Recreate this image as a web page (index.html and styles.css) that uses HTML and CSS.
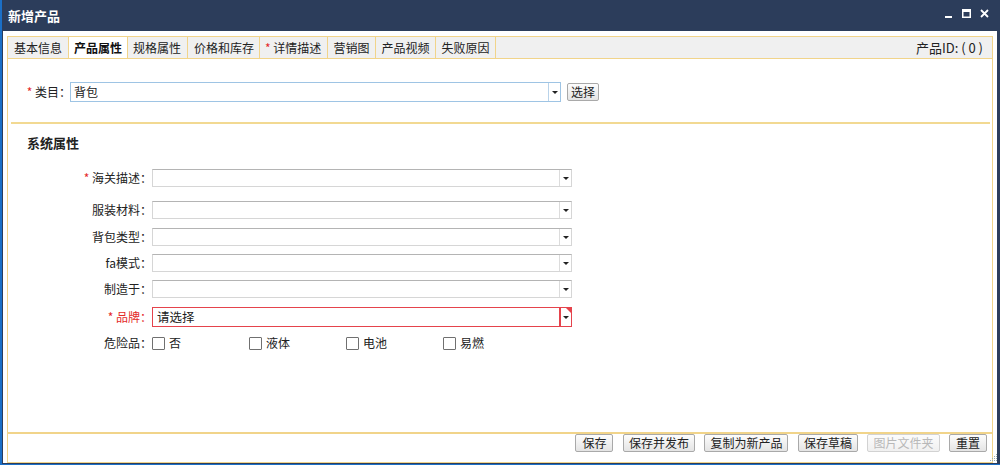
FILE: index.html
```html
<!DOCTYPE html>
<html lang="zh-CN">
<head>
<meta charset="utf-8">
<title>新增产品</title>
<link rel="stylesheet" href="styles.css">
</head>
<body>
<div class="window">
  <div class="titlebar">
    <span class="title">新增产品</span>
    <div class="controls">
      <svg class="ctl" width="9" height="9" viewBox="0 0 9 9"><rect x="1" y="7" width="7" height="2" fill="#fff"/></svg>
      <svg class="ctl" width="9" height="9" viewBox="0 0 9 9"><rect x="0.75" y="0.75" width="7.5" height="7.5" fill="none" stroke="#fff" stroke-width="1.5"/><rect x="0" y="0" width="9" height="3" fill="#fff"/></svg>
      <svg class="ctl" width="9" height="9" viewBox="0 0 9 9"><path d="M1 1 L8 8 M8 1 L1 8" stroke="#fff" stroke-width="1.8" fill="none"/></svg>
    </div>
  </div>
  <div class="client">
    <div class="tabpanel">
      <div class="tabstrip">
        <div class="tab tab-first">基本信息</div>
        <div class="tab active">产品属性</div>
        <div class="tab">规格属性</div>
        <div class="tab tab-wide">价格和库存</div>
        <div class="tab"><span class="req">*</span> 详情描述</div>
        <div class="tab">营销图</div>
        <div class="tab">产品视频</div>
        <div class="tab">失败原因</div>
        <div class="pid">产品ID: ( 0 )</div>
      </div>
      <div class="panel">
        <div class="cat-row">
          <label class="cat-label"><span class="req">*</span> 类目：</label>
          <div class="combo combo-cat"><span class="combo-text">背包</span><span class="combo-btn"><i class="caret"></i></span></div>
          <button class="btn btn-pick">选择</button>
        </div>
        <div class="sep"></div>
        <div class="section-title">系统属性</div>
        <div class="attrs">
          <div class="row row-first">
            <label class="lbl"><span class="req">*</span> 海关描述：</label>
            <div class="combo"><span class="combo-text"></span><span class="combo-btn"><i class="caret"></i></span></div>
          </div>
          <div class="row row-a">
            <label class="lbl">服装材料：</label>
            <div class="combo"><span class="combo-text"></span><span class="combo-btn"><i class="caret"></i></span></div>
          </div>
          <div class="row row-a">
            <label class="lbl">背包类型：</label>
            <div class="combo"><span class="combo-text"></span><span class="combo-btn"><i class="caret"></i></span></div>
          </div>
          <div class="row row-b">
            <label class="lbl">fa模式：</label>
            <div class="combo"><span class="combo-text"></span><span class="combo-btn"><i class="caret"></i></span></div>
          </div>
          <div class="row row-b">
            <label class="lbl">制造于：</label>
            <div class="combo"><span class="combo-text"></span><span class="combo-btn"><i class="caret"></i></span></div>
          </div>
          <div class="row row-brand">
            <label class="lbl lbl-error"><span class="req">*</span> 品牌：</label>
            <div class="combo combo-error"><span class="combo-text">请选择</span><span class="combo-btn"><i class="caret"></i></span><i class="err-mark"></i></div>
          </div>
          <div class="row row-check">
            <label class="lbl">危险品：</label>
            <div class="checks">
              <span class="check"><i class="box"></i>否</span>
              <span class="check"><i class="box"></i>液体</span>
              <span class="check"><i class="box"></i>电池</span>
              <span class="check"><i class="box"></i>易燃</span>
            </div>
          </div>
        </div>
      </div>
      <div class="footer">
        <button class="btn">保存</button>
        <button class="btn">保存并发布</button>
        <button class="btn">复制为新产品</button>
        <button class="btn">保存草稿</button>
        <button class="btn btn-disabled">图片文件夹</button>
        <button class="btn">重置</button>
      </div>
    </div>
  </div>
  <svg class="grip" width="8" height="8" viewBox="0 0 8 8">
    <rect x="6" y="0" width="1" height="1" fill="#9aa"/>
    <rect x="4" y="2" width="1" height="1" fill="#9aa"/><rect x="6" y="2" width="1" height="1" fill="#9aa"/>
    <rect x="2" y="4" width="1" height="1" fill="#9aa"/><rect x="4" y="4" width="1" height="1" fill="#9aa"/><rect x="6" y="4" width="1" height="1" fill="#9aa"/>
    <rect x="0" y="6" width="1" height="1" fill="#9aa"/><rect x="2" y="6" width="1" height="1" fill="#9aa"/><rect x="4" y="6" width="1" height="1" fill="#9aa"/><rect x="6" y="6" width="1" height="1" fill="#9aa"/>
  </svg>
</div>
</body>
</html>
```

FILE: styles.css
```css
* { box-sizing: border-box; }

html, body {
  margin: 0;
  padding: 0;
  width: 1000px;
  height: 465px;
  overflow: hidden;
  background: #2c3d5b;
}

body {
  font-family: "Noto Sans CJK SC", "Liberation Sans", sans-serif;
  font-size: 12px;
  color: #222;
}

.window {
  position: relative;
  width: 1000px;
  height: 465px;
  background: #2c3d5b;
  border-left: 2px solid #1b6fc6;
  border-bottom: 1px solid #1b6fc6;
  padding: 0 3px 1px 1px;
  display: flex;
  flex-direction: column;
}

.titlebar {
  height: 31px;
  display: flex;
  align-items: flex-start;
  padding: 0 8px 0 5px;
  flex: none;
}

.title {
  color: #fff;
  font-weight: bold;
  font-size: 13px;
  line-height: 31px;
}

.controls {
  margin-left: auto;
  margin-top: 9px;
  display: flex;
  gap: 9px;
}

.ctl { display: block; }

.client {
  flex: 1;
  background: #fff;
  padding: 5px 4px 0 4px;
  display: flex;
  flex-direction: column;
}

.tabpanel {
  flex: 1;
  display: flex;
  flex-direction: column;
}

.tabstrip {
  height: 23px;
  flex: none;
  display: flex;
  align-items: stretch;
  background: #f0f0f0;
  border: 1px solid #f1d48a;
}

.tab {
  padding: 0 6px 0 5px;
  border-right: 1px solid #f1d48a;
  line-height: 21px;
  white-space: nowrap;
  color: #222;
}

.tab-first { padding: 0 6px 0 6px; }
.tab-wide { padding: 0 5px 0 6px; }

.tab.active {
  background: #fff;
  font-weight: bold;
  color: #111;
  padding: 0 5px 0 5px;
}

.req { color: #e42a2a; }

.pid {
  margin-left: auto;
  padding-right: 9px;
  line-height: 21px;
  font-size: 13px;
  color: #222;
}

.panel {
  flex: 1;
  border-left: 1px solid #f1d48a;
  border-right: 1px solid #f1d48a;
  padding-top: 23px;
}

.cat-row {
  display: flex;
  align-items: center;
  height: 20px;
}

.cat-label {
  width: 63px;
  text-align: right;
  white-space: nowrap;
  line-height: 20px;
  flex: none;
  margin-right: -1px;
}

.combo {
  position: relative;
  display: flex;
  width: 420px;
  height: 18px;
  background: #fff;
  border: 1px solid #d6d6d6;
  border-top-color: #b4b4b4;
  flex: none;
}

.combo-text {
  flex: 1;
  padding-left: 4px;
  line-height: 16px;
  font-size: 12px;
}

.combo-btn {
  width: 12px;
  border-left: 1px solid #dcdcdc;
  display: flex;
  align-items: center;
  justify-content: center;
}

.caret {
  display: block;
  width: 0;
  height: 0;
  border-left: 3px solid transparent;
  border-right: 3px solid transparent;
  border-top: 3px solid #222;
}

.combo-cat {
  width: 491px;
  height: 20px;
  border: 1px solid #9ec4e4;
}

.combo-cat .combo-text { line-height: 18px; padding-left: 3px; }
.combo-cat .combo-btn { border-left-color: #b9d3ea; }

.btn {
  font-family: "Noto Sans CJK SC", "Liberation Sans", sans-serif;
  font-size: 12px;
  height: 18px;
  line-height: 16px;
  padding: 0 5px;
  min-width: 38px;
  border: 1px solid #a9a9a9;
  border-radius: 2px;
  background: linear-gradient(#fdfdfd, #e4e4e4);
  color: #222;
  margin: 0;
}

.btn-pick {
  margin-left: 6px;
  padding: 0 3px;
  min-width: 0;
}

.btn-disabled {
  color: #b8b8b8;
  border-color: #d2d2d2;
  background: linear-gradient(#fcfcfc, #f0f0f0);
}

.sep {
  height: 2px;
  background: #f2d992;
  margin: 20px 2px 0 3px;
}

.section-title {
  font-weight: bold;
  font-size: 13px;
  line-height: 16px;
  margin-top: 11px;
  padding-left: 19px;
}

.attrs {
  margin-top: 18px;
  display: flex;
  flex-direction: column;
}

.row {
  display: flex;
  align-items: center;
  height: 18px;
  flex: none;
}

.row-first { margin-bottom: 14px; }
.row-a { margin-bottom: 9px; }
.row-b { margin-bottom: 8px; }
.row-a + .row-a { margin-bottom: 8px; }
.row-b + .row-b { margin-bottom: 9px; }

.lbl {
  width: 144px;
  flex: none;
  text-align: right;
  white-space: nowrap;
  line-height: 18px;
}

.row-brand { height: 20px; margin-bottom: 9px; }

.combo-error {
  height: 20px;
  border: 1px solid #e5434c;
}
.combo-error .combo-text { line-height: 18px; font-size: 12.5px; }
.combo-error .combo-btn { border-left: 2px solid #e5434c; }

.err-mark {
  position: absolute;
  right: 0;
  top: 0;
  width: 0;
  height: 0;
  border-top: 5px solid #e5434c;
  border-left: 5px solid transparent;
}

.lbl-error { color: #e42a2a; }

.row-check { height: 14px; }

.checks {
  display: flex;
  align-items: center;
}

.check {
  width: 97px;
  display: flex;
  align-items: center;
  gap: 4px;
  line-height: 14px;
}

.box {
  display: block;
  width: 13px;
  height: 13px;
  border: 1px solid #707070;
  border-radius: 1px;
  background: #fff;
}

.footer {
  flex: none;
  height: 31px;
  border-top: 2px solid #f1d48a;
  border-bottom: 1px solid #f1d48a;
  border-left: 1px solid #f1d48a;
  border-right: 1px solid #f1d48a;
  display: flex;
  justify-content: flex-end;
  align-items: flex-start;
  gap: 9.5px;
  padding: 0 5px 0 0;
}

.grip {
  position: absolute;
  right: 2px;
  bottom: 2px;
}
```
